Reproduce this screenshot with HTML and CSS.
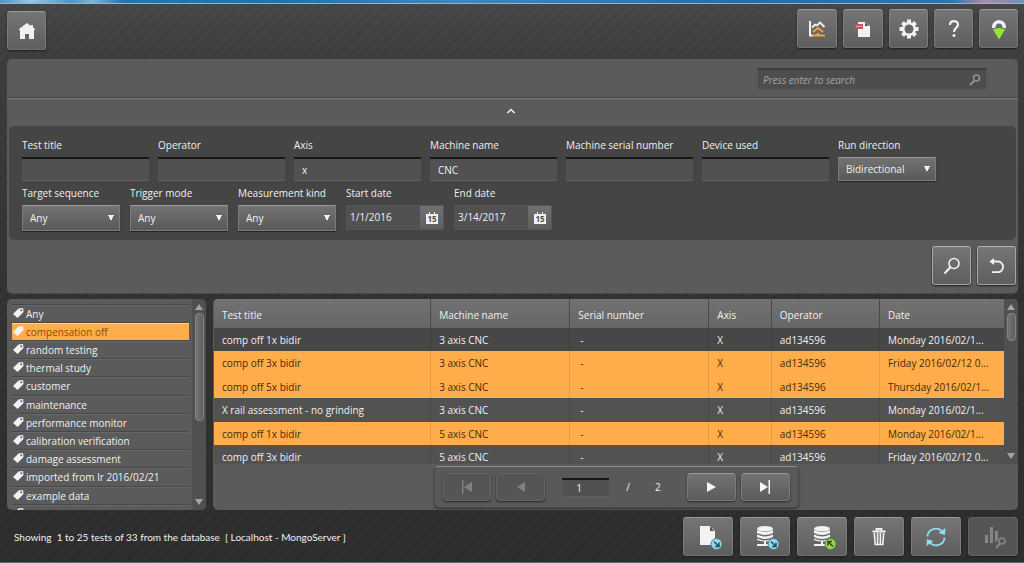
FILE: index.html
```html
<!DOCTYPE html>
<html lang="en">
<head>
<meta charset="utf-8">
<title>Test database</title>
<link rel="stylesheet" href="styles.css">
</head>
<body>
<div class="strip"></div>
<header class="topbar">
  <button class="btn" aria-label="Home"><svg width="16" height="16" viewBox="0 0 16 16"><path fill="#f2f2f2" d="M8 0 0 6v1h1v9h5v-5h4v5h5V7h1V6l-2-1.500V2h-2v1z"/></svg></button>
  <div class="tools">
    <button class="btn wide" aria-label="Charts"><svg width="18" height="18" viewBox="0 0 18 18" fill="none"><path d="M2 1v14.500h3" stroke="#f2f2f2" stroke-width="2"/><path d="m4 7.500 3-3 2 1 3-3 4.500 4.500" stroke="#f2f2f2" stroke-width="1.800"/><path d="m5 12 5-4 5 4" stroke="#f0a04b" stroke-width="2"/><path d="M4 14.500h4l2-2 2 2h5v2H4z" fill="#f0a04b"/></svg></button>
    <button class="btn wide" aria-label="Reports"><svg width="18" height="18" viewBox="0 0 18 18"><path fill="#f2f2f2" d="M4 2h7l5 4v11H4z"/><path fill="#555" d="m11 2 4 4h-4z"/><path fill="#c95362" d="M1 4h8v5H1z"/><path d="M2 6.500h6" stroke="#e2a0a7"/></svg></button>
    <button class="btn" aria-label="Settings"><svg width="20" height="20" viewBox="0 0 20 20"><g stroke="#f2f2f2" stroke-width="4"><path d="M10 0.500v19M.5 10h19M3.500 3.500l13 13M16.500 3.500l-13 13"/></g><circle cx="10" cy="10" r="7" fill="#f2f2f2"/><circle cx="10" cy="10" r="4.500" fill="#676767"/></svg></button>
    <button class="btn" aria-label="Help"><svg width="14" height="18" viewBox="0 0 14 18" fill="none"><path d="M3 5c0-5 8-5 8-.5C11 8 7 7.500 7 12" stroke="#f2f2f2" stroke-width="2.200"/><circle cx="7" cy="15.500" r="1.500" fill="#f2f2f2"/></svg></button>
    <button class="btn" aria-label="Status"><svg width="16" height="22" viewBox="0 0 16 22" fill="none"><path d="M2.800 10a5.300 5.300 0 1 1 10.400 0" stroke="#f2f2f2" stroke-width="3.500"/><path d="M2 11.500q6-3 12 0l-6 10z" fill="#8fe835"/></svg></button>
  </div>
</header>

<section class="panel search">
  <div class="quick">
    <label class="quickbox"><input type="text" placeholder="Press enter to search" aria-label="Search"><svg width="12" height="12" viewBox="0 0 12 12" fill="none" stroke="#929292"><circle cx="7.500" cy="4" r="3" stroke-width="1.500"/><path d="M5.500 6.500 1 11" stroke-width="2"/></svg></label>
  </div>
  <button class="collapse" aria-label="Collapse filters"><svg width="10" height="8" viewBox="0 0 10 8"><path d="m1.500 6 3.500-3.500L8.500 6" fill="none" stroke="#f2f2f2" stroke-width="1.500"/></svg></button>
  <div class="filters">
    <div class="row">
      <label class="field">Test title<input type="text"></label>
      <label class="field">Operator<input type="text"></label>
      <label class="field">Axis<input type="text" value="x"></label>
      <label class="field">Machine name<input type="text" value="CNC"></label>
      <label class="field">Machine serial number<input type="text"></label>
      <label class="field">Device used<input type="text"></label>
      <label class="field small">Run direction<select class="short"><option>Bidirectional</option></select></label>
    </div>
    <div class="row second">
      <label class="field small">Target sequence<select><option>Any</option></select></label>
      <label class="field small">Trigger mode<select><option>Any</option></select></label>
      <label class="field small">Measurement kind<select><option>Any</option></select></label>
      <div class="field small"><label for="start">Start date</label><div class="date"><input id="start" type="text" value="1/1/2016"><button aria-label="Pick start date"><svg width="14" height="14" viewBox="0 0 14 14"><path fill="#f2f2f2" d="M1 3h3V1h1v2h4V1h1v2h3v10H1z"/><text x="7" y="11" text-anchor="middle" class="day">15</text></svg></button></div></div>
      <div class="field small"><label for="end">End date</label><div class="date"><input id="end" type="text" value="3/14/2017"><button aria-label="Pick end date"><svg width="14" height="14" viewBox="0 0 14 14"><path fill="#f2f2f2" d="M1 3h3V1h1v2h4V1h1v2h3v10H1z"/><text x="7" y="11" text-anchor="middle" class="day">15</text></svg></button></div></div>
    </div>
  </div>
  <div class="actions">
    <button class="btn bright" aria-label="Search"><svg width="18" height="18" viewBox="0 0 18 18" fill="none" stroke="#f2f2f2" stroke-width="1.600"><circle cx="11" cy="6.500" r="5"/><path d="m7.500 10-6 6.500" stroke-width="2"/></svg></button>
    <button class="btn bright" aria-label="Reset"><svg width="18" height="18" viewBox="0 0 18 18" fill="none"><path d="M4 4.500h6a5 5.300 0 0 1 0 10.700H4" stroke="#f2f2f2" stroke-width="1.800"/><path d="M1.500 4.500 6 1v7z" fill="#f2f2f2"/></svg></button>
  </div>
</section>

<main class="content">
  <aside class="panel tags">
    <ul class="taglist">
      <li><button><svg class="tag" viewBox="0 0 12 12"><path d="M6 1 11 .5l.5 4.500L5 11.500 0 7zM9 2a1 1 0 1 0 .1 0z"/></svg>Any</button></li>
      <li><button class="on"><svg class="tag" viewBox="0 0 12 12"><path d="M6 1 11 .5l.5 4.500L5 11.500 0 7z"/></svg>compensation off</button></li>
      <li><button><svg class="tag" viewBox="0 0 12 12"><path d="M6 1 11 .5l.5 4.500L5 11.500 0 7zM9 2a1 1 0 1 0 .1 0z"/></svg>random testing</button></li>
      <li><button><svg class="tag" viewBox="0 0 12 12"><path d="M6 1 11 .5l.5 4.500L5 11.500 0 7zM9 2a1 1 0 1 0 .1 0z"/></svg>thermal study</button></li>
      <li><button><svg class="tag" viewBox="0 0 12 12"><path d="M6 1 11 .5l.5 4.500L5 11.500 0 7zM9 2a1 1 0 1 0 .1 0z"/></svg>customer</button></li>
      <li><button><svg class="tag" viewBox="0 0 12 12"><path d="M6 1 11 .5l.5 4.500L5 11.500 0 7zM9 2a1 1 0 1 0 .1 0z"/></svg>maintenance</button></li>
      <li><button><svg class="tag" viewBox="0 0 12 12"><path d="M6 1 11 .5l.5 4.500L5 11.500 0 7zM9 2a1 1 0 1 0 .1 0z"/></svg>performance monitor</button></li>
      <li><button><svg class="tag" viewBox="0 0 12 12"><path d="M6 1 11 .5l.5 4.500L5 11.500 0 7zM9 2a1 1 0 1 0 .1 0z"/></svg>calibration verification</button></li>
      <li><button><svg class="tag" viewBox="0 0 12 12"><path d="M6 1 11 .5l.5 4.500L5 11.500 0 7zM9 2a1 1 0 1 0 .1 0z"/></svg>damage assessment</button></li>
      <li><button><svg class="tag" viewBox="0 0 12 12"><path d="M6 1 11 .5l.5 4.500L5 11.500 0 7zM9 2a1 1 0 1 0 .1 0z"/></svg>imported from lr 2016/02/21</button></li>
      <li><button><svg class="tag" viewBox="0 0 12 12"><path d="M6 1 11 .5l.5 4.500L5 11.500 0 7zM9 2a1 1 0 1 0 .1 0z"/></svg>example data</button></li>
      <li><button><svg class="tag" viewBox="0 0 12 12"><path d="M6 1 11 .5l.5 4.500L5 11.500 0 7zM9 2a1 1 0 1 0 .1 0z"/></svg>laser</button></li>
    </ul>
    <div class="scroll"><i class="up"></i><div class="track"><div class="thumb long"></div></div><i class="down"></i></div>
  </aside>

  <section class="panel results">
    <div class="tablearea">
      <div class="tablebox">
        <table>
          <colgroup><col class="c1"><col class="c2"><col class="c3"><col class="c4"><col class="c5"><col class="c6"></colgroup>
          <thead><tr><th>Test title</th><th>Machine name</th><th>Serial number</th><th>Axis</th><th>Operator</th><th>Date</th></tr></thead>
          <tbody>
            <tr class="dark"><td>comp off 1x bidir</td><td>3 axis CNC</td><td>-</td><td>X</td><td>ad134596</td><td>Monday 2016/02/1...</td></tr>
            <tr class="on"><td>comp off 3x bidir</td><td>3 axis CNC</td><td>-</td><td>X</td><td>ad134596</td><td>Friday 2016/02/12 0...</td></tr>
            <tr class="on"><td>comp off 5x bidir</td><td>3 axis CNC</td><td>-</td><td>X</td><td>ad134596</td><td>Thursday 2016/02/1...</td></tr>
            <tr><td>X rail assessment - no grinding</td><td>3 axis CNC</td><td>-</td><td>X</td><td>ad134596</td><td>Monday 2016/02/1...</td></tr>
            <tr class="on"><td>comp off 1x bidir</td><td>5 axis CNC</td><td>-</td><td>X</td><td>ad134596</td><td>Monday 2016/02/1...</td></tr>
            <tr><td>comp off 3x bidir</td><td>5 axis CNC</td><td>-</td><td>X</td><td>ad134596</td><td>Friday 2016/02/12 0...</td></tr>
          </tbody>
        </table>
      </div>
      <div class="scroll"><i class="up"></i><div class="track"><div class="thumb"></div></div><i class="down"></i></div>
    </div>
    <nav class="pager">
      <button class="page" disabled aria-label="First page"><svg width="12" height="14" viewBox="0 0 12 14"><path d="M1 0h1.500v14H1zM11 2v10L3 7z"/></svg></button>
      <button class="page" disabled aria-label="Previous page"><svg width="12" height="14" viewBox="0 0 12 14"><path d="M10 2v10L2 7z"/></svg></button>
      <input type="text" value="1" aria-label="Page">
      <span class="slash">/</span><span class="total">2</span>
      <button class="page" aria-label="Next page"><svg width="12" height="14" viewBox="0 0 12 14"><path d="M2 2v10l9-5z"/></svg></button>
      <button class="page" aria-label="Last page"><svg width="12" height="14" viewBox="0 0 12 14"><path d="M1 2v10l8-5zM9.500 0H11v14H9.500z"/></svg></button>
    </nav>
  </section>
</main>

<footer class="footer">
  <p class="status">Showing&nbsp; 1 to 25 tests of 33 from the database&nbsp; [ Localhost - MongoServer ]</p>
  <div class="cmds">
    <button class="btn cmd pair" aria-label="Import file"><svg width="24" height="26" viewBox="0 0 24 26"><path fill="#f2f2f2" d="M1 1h10l5 5v14H1z"/><path fill="#555" d="M11 1v5h5l-2-1-2-3z"/><circle cx="17.500" cy="19" r="5.500" fill="#8fdcf0" stroke="#5f7479"/><path d="m15 16.500 4.500 4.500M20 17.500V21.500H16" fill="none" stroke="#26515e" stroke-width="1.600"/></svg></button>
    <button class="btn cmd pair" aria-label="Import to database"><svg width="24" height="26" viewBox="0 0 24 26"><g fill="#f2f2f2"><ellipse cx="9" cy="3.800" rx="8" ry="2.800"/><path d="M1 5q8 4 16 0v3q-8 4-16 0zM1 9.500q8 4 16 0V12q-8 4-16 0zM1 13.500q8 4 16 0V15q-8 3-16 0zM8 16h2v3h4v2H1v-2h7z"/></g><circle cx="17.500" cy="19" r="5.500" fill="#8fdcf0" stroke="#5f7479"/><path d="m15 16.500 4.500 4.500M20 17.500V21.500H16" fill="none" stroke="#26515e" stroke-width="1.600"/></svg></button>
    <button class="btn cmd pair" aria-label="Export from database"><svg width="24" height="26" viewBox="0 0 24 26"><g fill="#f2f2f2"><ellipse cx="9" cy="3.800" rx="8" ry="2.800"/><path d="M1 5q8 4 16 0v3q-8 4-16 0zM1 9.500q8 4 16 0V12q-8 4-16 0zM1 13.500q8 4 16 0V15q-8 3-16 0zM8 16h2v3h4v2H1v-2h7z"/></g><circle cx="17.500" cy="19" r="5.500" fill="#93da3c" stroke="#647a4b"/><path d="m20 21.500-4.500-4.500M15 20.500V16.500H19" fill="none" stroke="#2f5212" stroke-width="1.600"/></svg></button>
    <button class="btn cmd" aria-label="Delete"><svg width="14" height="18" viewBox="0 0 14 18" fill="none" stroke="#f2f2f2"><path d="M.5 3.500h13M4.500 2.500v-1.500h5v1.500" stroke-width="1.800"/><path d="m2.300 5 .9 11.500h7.600L11.700 5M5.600 5v11M8.400 5v11" stroke-width="1.600"/></svg></button>
    <button class="btn cmd" aria-label="Refresh"><svg width="22" height="20" viewBox="0 0 22 20" fill="none" stroke="#8fdcf0" stroke-width="1.800"><path d="M2.500 9.500A8.300 8 0 0 1 17.500 5M19.500 10.500A8.300 8 0 0 1 4.500 15"/><path fill="#8fdcf0" stroke="none" d="m20.500 1-.5 7-6.500-2zM1.500 19l.5-7 6.500 2z"/></svg></button>
    <button class="btn cmd pair" disabled aria-label="Analyse"><svg width="22" height="24" viewBox="0 0 22 24"><path fill="#858585" d="M0 9h3v8H0zM5 1h3v16H5zM10 5h3v9l-3 2z"/><g fill="none" stroke="#858585"><circle cx="17" cy="15" r="3" stroke-width="1.600"/><path d="m15 17.500-4 4.500" stroke-width="2"/></g></svg></button>
  </div>
</footer>
</body>
</html>
```
FILE: styles.css
```css
* { box-sizing: border-box; }

body {
  margin: 0;
  min-height: 100vh;
  display: flex;
  flex-direction: column;
  color: #f0f0f0;
  font: 10px/14px "Open Sans", "Noto Sans", sans-serif;
  background:
    repeating-linear-gradient(135deg, rgba(255,255,255,.006) 0 4px, rgba(0,0,0,.04) 5px 7px, rgba(255,255,255,.006) 8px),
    linear-gradient(#484848 0, #3d3d3d 58px, #323232 300px, #2d2d2d);
  border-bottom: 1px solid #596473;
}

button, input, select { font: inherit; color: inherit; margin: 0; }
button { padding: 0; cursor: pointer; }

.strip {
  height: 4px;
  background: linear-gradient(90deg, #4d95c5, #9bc8e4 3%, #4d95c5 7%, #7fb5d6 9%, #1f78b4 12%, #1d74b0 28%, #3a8ac0 45%, #1d6fae 72%, #2b76b0 93%, #a98ba5 96%, #6d92bb);
  border-bottom: 1px solid #8db6cf;
}

.topbar {
  height: 55px;
  padding: 5px 6px 0 7px;
  display: flex;
  justify-content: space-between;
}
.topbar > .btn { margin-top: 2px; }
.tools { display: flex; gap: 6px; }

.btn {
  width: 39px;
  height: 39px;
  display: flex;
  align-items: center;
  justify-content: center;
  border: 1px solid #858585;
  border-color: #9a9a9a #7c7c7c #707070;
  border-radius: 3px;
  background: linear-gradient(#757575, #5e5e5e);
  box-shadow: 0 1px 2px #1c1c1c;
}
.btn.wide { width: 40px; }
.btn.cmd { width: 50px; }
.btn.pair { padding: 3px 0 0 6px; }
.btn.bright { border-color: #b4b4b4 #a5a5a5 #a0a0a0; }
.btn:disabled { background: #555; border-color: #626262; }

.panel {
  background: #5b5b5b;
  border-radius: 5px;
}

.search { margin: 0 6px 6px 7px; padding: 0 2px 8px; box-shadow: 0 1px 1px #4c4c4c; }
.quick {
  display: flex;
  justify-content: flex-end;
  margin: 0 -2px;
  padding: 9px 31px 7px;
  border-bottom: 1px solid #474747;
  box-shadow: 0 1px #747474, 0 2px #686868;
}
.quickbox {
  display: flex;
  align-items: center;
  width: 230px;
  height: 22px;
  padding: 0 5px;
  background: #4d4d4d;
  border: 1px solid #575757;
  border-top: 2px solid #3c3c3c;
}
.quickbox input { flex: 1; min-width: 0; border: 0; padding: 0; background: none; outline: 0; font-style: italic; }
.quickbox input::placeholder { color: #a3a3a3; opacity: 1; }

.collapse {
  display: flex;
  align-items: center;
  justify-content: center;
  width: 100%;
  height: 28px;
  padding: 0 4px 2px 0;
  border: 0;
  background: none;
}

.filters {
  min-height: 114px;
  padding: 12px 13px 9px;
  background: #454545;
  border-radius: 5px;
}
.row { display: flex; flex-wrap: wrap; gap: 9px; }
.row.second { gap: 10px; margin-top: 5px; }
.field { display: block; width: 127px; white-space: nowrap; }
.field.small { width: 98px; }
.field > input, .field > select, .date { display: flex; width: 100%; margin-top: 5px; }
.field > input, .pager input {
  height: 24px;
  padding: 1px 8px 0;
  background: #515154;
  border: 0;
  border-top: 2px solid #171717;
  border-bottom: 1px solid #606060;
  outline: 0;
}
select {
  height: 26px;
  padding: 0 7px;
  appearance: none;
  border: 1px solid #7d7d7d;
  border-top-color: #9a9a9a;
  border-radius: 1px;
  box-shadow: 0 1px 1px #222;
  background:
    conic-gradient(from -27deg at 50% 100%, #f2f2f2 54deg, transparent 0) right 5px center / 6px 6px no-repeat,
    linear-gradient(#737373, #595959);
}
select.short { height: 24px; }
.date { height: 25px; background: #515154; border: 1px solid #555; }
.date input { flex: 1; min-width: 0; border: 0; padding: 0 3px 2px; background: none; outline: 0; }
.date button {
  width: 23px;
  display: flex;
  align-items: center;
  justify-content: center;
  border: 0;
  background: linear-gradient(#717171, #5e5e5e);
}
.day { font-size: 8px; font-weight: 700; fill: #4b4b4b; }

.actions { display: flex; justify-content: flex-end; gap: 6px; padding-top: 6px; }

.content { flex: 1; display: flex; gap: 7px; margin: 0 6px 0 7px; min-height: 211px; }
.tags { width: 199px; display: flex; overflow: hidden; }
.taglist {
  flex: 1;
  height: 211px;
  overflow: hidden;
  list-style: none;
  margin: 0;
  padding: 5px 3px 0 5px;
}
.taglist li { height: 18px; border-top: 1px solid #484848; box-shadow: inset 0 1px #676767; }
.taglist li:nth-child(5n) { height: 19px; }
.taglist button {
  width: 100%;
  height: 17px;
  display: flex;
  align-items: center;
  gap: 2px;
  border: 0;
  padding: 1px 0 0 1px;
  background: none;
}
.taglist .on { background: #ffad4a; color: #8a4b08; box-shadow: inset 0 1px #ffd397; }
.tag { width: 11px; height: 12px; fill: #f2f2f2; margin-bottom: 2px; }

.scroll { width: 14px; display: flex; flex-direction: column; align-items: center; padding: 5px 0; background: #505050; }
.track { flex: 1; padding: 3px 0; }
.thumb { width: 9px; height: 28px; border: 1px solid #858585; border-radius: 4px; background: linear-gradient(90deg, #737373, #606060); }
.thumb.long { height: 108px; }
.up, .down { border: 4px solid transparent; border-top-width: 0; border-bottom: 6px solid #a5a5a5; }
.down { border-bottom: 0; border-top: 6px solid #a5a5a5; }

.results { flex: 1; min-width: 0; overflow: hidden; padding-left: 1px; }
.tablearea { height: 165px; display: flex; }
.tablebox { flex: 1; min-width: 0; overflow: hidden; }
table { width: 100%; table-layout: fixed; border-collapse: separate; border-spacing: 0; }
.c1 { width: 27.5%; }
.c2 { width: 17.6%; }
.c3 { width: 17.6%; }
.c4 { width: 7.9%; }
.c5 { width: 13.7%; }
th, td { padding: 0 8px; text-align: left; font-weight: 400; white-space: nowrap; overflow: hidden; }
th { height: 29px; padding-top: 3px; background: linear-gradient(#727272, #666); border-right: 1px solid #4a4a4a; }
td { height: 23px; background: #525252; border-right: 1px solid #4a4a4a; }
tr:nth-child(even) td { height: 24px; }
th:last-child, td:last-child { border-right: 0; padding-right: 0; }
.dark td { background: #474747; border-color: #404040; }
tbody .on td { background: #ffad4a; color: #4a2808; border-color: #e79c44; }
td:nth-child(3) { padding-left: 10px; }

.pager {
  width: 365px;
  height: 42px;
  margin: 2px auto 0;
  padding: 0 8px;
  display: flex;
  align-items: center;
  border: 1px solid #494949;
  border-top-color: #919191;
  border-radius: 5px;
  background: #595959;
  box-shadow: 0 1px 2px #333;
}
.page {
  width: 49px;
  height: 28px;
  display: flex;
  align-items: center;
  justify-content: center;
  border: 1px solid #7a7a7a;
  border-top-color: #999;
  border-radius: 4px;
  background: linear-gradient(#737373, #5b5b5b);
  box-shadow: 0 1px 2px #292929;
  fill: #f5f5f5;
}
.page + .page { margin-left: 5px; }
.page:disabled { fill: #808080; background: #555; border-color: #656565; }
.pager input { width: 47px; height: 19px; margin-left: 17px; padding: 1px 14px 0; }
.slash { margin-left: 17px; }
.total { margin: 0 26px 0 25px; }

.footer { display: flex; justify-content: space-between; align-items: center; padding: 7px 6px 6px 14px; }
.status { margin: 0; font-family: Lato, "Open Sans", sans-serif; }
.cmds { display: flex; gap: 7px; }
```
